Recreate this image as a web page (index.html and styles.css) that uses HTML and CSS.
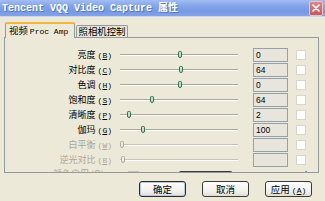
FILE: index.html
```html
<!DOCTYPE html>
<html>
<head>
<meta charset="utf-8">
<link rel="stylesheet" href="styles.css">
</head>
<body>
<div class="window">
  <div class="titlebar">
    <span class="title"><span class="lat">Tencent VQQ Video Capture </span>属性</span>
    <span class="close"><svg width="8" height="8" viewBox="0 0 8 8"><path d="M1 1L7 7M7 1L1 7" stroke="#fff" stroke-width="1.6" stroke-linecap="round"/></svg></span>
  </div>
  <div class="tabs">
    <div class="tab active">视频 <span class="tablat">Proc Amp</span></div>
    <div class="tab">照相机控制</div>
  </div>
  <div class="panel">
    <div class="row">
      <span class="label">亮度 <span class="key">(<u>B</u>)</span></span>
      <div class="slider"><div class="track"></div><div class="thumb" style="left:58px"></div></div>
      <div class="box">0</div>
      <div class="check"></div>
    </div>
    <div class="row">
      <span class="label">对比度 <span class="key">(<u>C</u>)</span></span>
      <div class="slider"><div class="track"></div><div class="thumb" style="left:59px"></div></div>
      <div class="box">64</div>
      <div class="check"></div>
    </div>
    <div class="row">
      <span class="label">色调 <span class="key">(<u>H</u>)</span></span>
      <div class="slider"><div class="track"></div><div class="thumb" style="left:58px"></div></div>
      <div class="box">0</div>
      <div class="check"></div>
    </div>
    <div class="row">
      <span class="label">饱和度 <span class="key">(<u>S</u>)</span></span>
      <div class="slider"><div class="track"></div><div class="thumb" style="left:30px"></div></div>
      <div class="box">64</div>
      <div class="check"></div>
    </div>
    <div class="row">
      <span class="label">清晰度 <span class="key">(<u>P</u>)</span></span>
      <div class="slider"><div class="track"></div><div class="thumb" style="left:7px"></div></div>
      <div class="box">2</div>
      <div class="check"></div>
    </div>
    <div class="row">
      <span class="label">伽玛 <span class="key">(<u>G</u>)</span></span>
      <div class="slider"><div class="track"></div><div class="thumb" style="left:21px"></div></div>
      <div class="box">100</div>
      <div class="check"></div>
    </div>
    <div class="row disabled">
      <span class="label">白平衡 <span class="key">(<u>W</u>)</span></span>
      <div class="slider"><div class="track"></div><div class="thumb" style="left:0px"></div></div>
      <div class="box"></div>
      <div class="check"></div>
    </div>
    <div class="row disabled">
      <span class="label">逆光对比 <span class="key">(<u>B</u>)</span></span>
      <div class="slider"><div class="track"></div><div class="thumb" style="left:1px"></div></div>
      <div class="box"></div>
      <div class="check"></div>
    </div>
    <div class="row extra">
      <span class="elabel">颜色启用 (O)</span>
      <div class="echeck"></div>
      <div class="dbtn">默认值 (D)</div>
      <span class="auto">自动</span>
    </div>
  </div>
  <div class="buttons">
    <div class="btn default">确定</div>
    <div class="btn">取消</div>
    <div class="btn">应用 <span class="key">(<u>A</u>)</span></div>
  </div>
</div>
</body>
</html>
```

FILE: styles.css
```css
html, body {
  margin: 0;
  padding: 0;
}
body {
  width: 325px;
  height: 201px;
  overflow: hidden;
  background: #ece9d8;
  font-family: "Noto Sans CJK SC", "Liberation Sans", sans-serif;
  font-size: 9.5px;
  color: #000;
}
.window {
  width: 325px;
  height: 201px;
  background: #ece9d8;
}
.titlebar {
  height: 17px;
  display: flex;
  align-items: center;
  justify-content: space-between;
  padding-left: 2px;
  box-sizing: border-box;
  background: linear-gradient(#a3bdf2 0%, #86a6ea 35%, #7799e3 70%, #84a3e6 100%);
  border-bottom: 1px solid #c9d6f2;
}
.title {
  color: #fff;
  font-weight: bold;
  font-size: 10px;
  line-height: 16px;
  white-space: pre;
  text-shadow: 1px 1px 0 #5676bd;
}
.title .lat {
  font-family: "Liberation Mono", monospace;
  font-size: 10px;
}
.close {
  width: 14px;
  height: 15px;
  margin-right: 2px;
  box-sizing: border-box;
  border: 1px solid #ecc3c3;
  border-radius: 2px;
  background: linear-gradient(#d98a8a, #c25a5e);
  display: flex;
  align-items: center;
  justify-content: center;
}
.tabs {
  display: flex;
  align-items: flex-end;
  height: 15px;
  margin-top: 5px;
  padding-left: 5px;
}
.tab {
  box-sizing: border-box;
  height: 12px;
  width: 52px;
  border: 1px solid #919b9c;
  border-bottom: none;
  border-radius: 2px 2px 0 0;
  background: #e9e6d6;
  font-size: 9.4px;
  line-height: 11px;
  text-align: center;
  white-space: nowrap;
  margin-left: 1px;
}
.tab.active {
  width: 70px;
  height: 16px;
  margin-left: 0;
  margin-bottom: -1px;
  border-top: 2px solid #f2b540;
  background: #ece9d8;
  line-height: 12px;
  text-align: left;
  padding-left: 3px;
  position: relative;
  z-index: 1;
}
.tablat {
  font-family: "Liberation Mono", monospace;
  font-size: 8px;
}
.panel {
  margin-left: 4px;
  width: 315px;
  height: 136px;
  box-sizing: border-box;
  border: 1px solid #919b9c;
  padding-top: 9px;
  overflow: hidden;
  background: #ece9d8;
}
.row {
  display: flex;
  align-items: center;
  height: 15px;
}
.label {
  width: 107px;
  text-align: right;
  white-space: nowrap;
  font-size: 9px;
  line-height: 15px;
}
.key {
  font-family: "Liberation Mono", monospace;
  font-size: 8px;
}
.slider {
  margin-left: 8px;
  width: 118px;
  height: 9px;
  position: relative;
  display: flex;
  align-items: center;
}
.track {
  width: 100%;
  height: 1px;
  background: #a9a79c;
  border-bottom: 1px solid #ffffff;
}
.thumb {
  position: absolute;
  top: 1px;
  width: 2px;
  height: 5px;
  border: 1px solid #2f7250;
  border-radius: 2px 2px 3px 3px;
  background: #c6e0c4;
}
.box {
  margin-left: 15px;
  width: 35px;
  height: 14px;
  box-sizing: border-box;
  border: 1px solid #94a0ab;
  background: #e8e6dc;
  font-family: "Liberation Sans", sans-serif;
  font-size: 8.5px;
  line-height: 12px;
  padding-left: 2px;
}
.check {
  margin-left: 8px;
  width: 10px;
  height: 10px;
  box-sizing: border-box;
  border: 1px solid #d8d6cc;
  background: #ffffff;
}
.row.disabled .label {
  color: #aca899;
}
.row.disabled .track {
  background: #c6c3b6;
}
.row.disabled .thumb {
  border-color: #b0ad9f;
  background: #ecebe3;
}
.row.extra {
  align-items: flex-start;
  height: 8px;
  margin-top: 3px;
}
.elabel {
  width: 70px;
  margin-left: 48px;
  color: #aca899;
  font-size: 9px;
  line-height: 8px;
  white-space: nowrap;
}
.echeck {
  width: 9px;
  height: 9px;
  margin-left: 6px;
  margin-top: 1px;
  border: 1px solid #c5c2b4;
  background: #fff;
}
.dbtn {
  margin-left: 40px;
  margin-top: 1px;
  width: 54px;
  height: 8px;
  box-sizing: border-box;
  border: 1px solid #3d3d3d;
  border-bottom: none;
  border-radius: 2px 2px 0 0;
  background: #f7f6f1;
  font-size: 8.5px;
  line-height: 12px;
  text-align: center;
  overflow: hidden;
}
.auto {
  margin-left: 70px;
  font-size: 8px;
  line-height: 8px;
  margin-top: 1px;
}
.buttons {
  display: flex;
  justify-content: flex-end;
  gap: 16px;
  padding-right: 13px;
  margin-top: 8px;
}
.btn {
  width: 47px;
  height: 16px;
  box-sizing: border-box;
  border: 1px solid #3a3a3a;
  border-radius: 3px;
  background: linear-gradient(#ffffff, #f0efe9 70%, #dedcd2);
  font-size: 9.5px;
  line-height: 14px;
  text-align: center;
  white-space: nowrap;
}
.btn.default {
  border-color: #2a2a2a;
  box-shadow: inset 0 0 0 1px #b9c9e8;
}
```
